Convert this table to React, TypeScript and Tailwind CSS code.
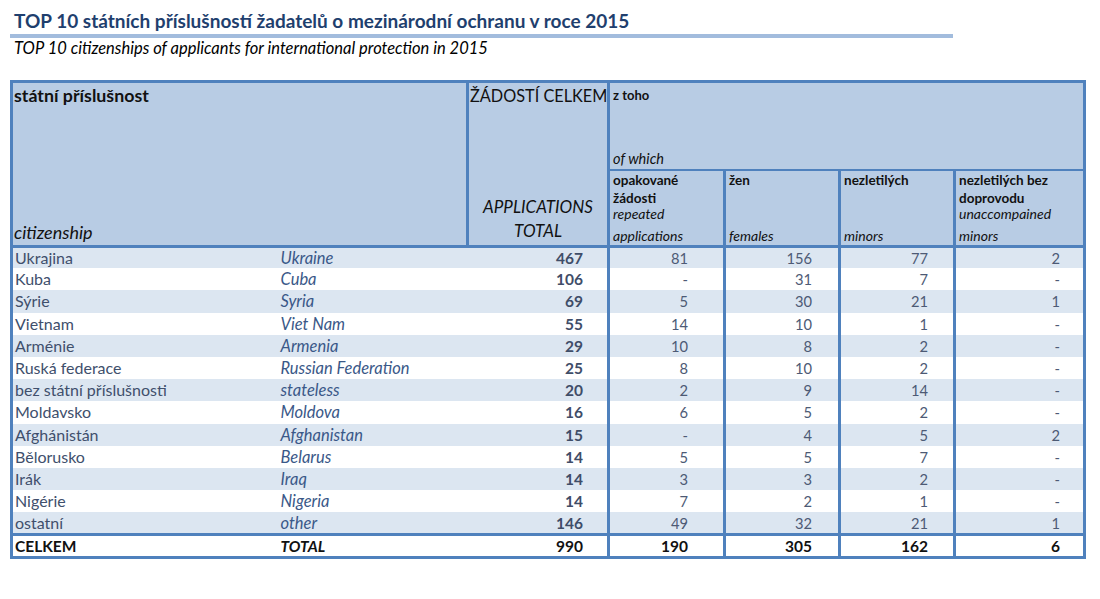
import React from "react";

type Row = [string, string, string, string, string, string, string];

const rows: Row[] = [
  ["Ukrajina", "Ukraine", "467", "81", "156", "77", "2"],
  ["Kuba", "Cuba", "106", "-", "31", "7", "-"],
  ["Sýrie", "Syria", "69", "5", "30", "21", "1"],
  ["Vietnam", "Viet Nam", "55", "14", "10", "1", "-"],
  ["Arménie", "Armenia", "29", "10", "8", "2", "-"],
  ["Ruská federace", "Russian Federation", "25", "8", "10", "2", "-"],
  ["bez státní příslušnosti", "stateless", "20", "2", "9", "14", "-"],
  ["Moldavsko", "Moldova", "16", "6", "5", "2", "-"],
  ["Afghánistán", "Afghanistan", "15", "-", "4", "5", "2"],
  ["Bělorusko", "Belarus", "14", "5", "5", "7", "-"],
  ["Irák", "Iraq", "14", "3", "3", "2", "-"],
  ["Nigérie", "Nigeria", "14", "7", "2", "1", "-"],
  ["ostatní", "other", "146", "49", "32", "21", "1"],
];

export default function App() {
  return (
    <div
      className="w-[1100px] h-[599px] bg-white overflow-hidden"
      style={{ fontFamily: "Lato, 'Open Sans', sans-serif" }}
    >
      <div className="pt-[9px] pl-[10px]">
        <div className="pl-[4px] text-[19px] leading-[23px] font-bold text-[#1f3f6e]">
          TOP 10 státních příslušností žadatelů o mezinárodní ochranu v roce 2015
        </div>
        <div className="mt-[2px] w-[943px] h-[4px] bg-[#a2bcdd]" />
        <div className="pl-[4px] mt-[1px] text-[16.5px] leading-[19px] italic text-black">
          TOP 10 citizenships of applicants for international protection in 2015
        </div>
      </div>

      <div className="mt-[22px] ml-[10px]">
        <table className="table-fixed border-collapse border-[3px] border-[#4f81bd] w-[1073px]">
          <colgroup>
            <col className="w-[266px]" />
            <col className="w-[190px]" />
            <col className="w-[141px]" />
            <col className="w-[116px]" />
            <col className="w-[115px]" />
            <col className="w-[115px]" />
            <col className="w-[130px]" />
          </colgroup>
          <thead>
            <tr className="h-[87px] bg-[#b8cce4]">
              <td
                colSpan={2}
                rowSpan={2}
                className="align-top p-0 border-r-[3px] border-b-[3px] border-[#4f81bd]"
              >
                <div className="flex flex-col justify-between h-[161px] pl-[1px] pt-[2px] pb-[1px]">
                  <span className="text-[17.8px] leading-[21px] font-bold text-[#111]">
                    státní příslušnost
                  </span>
                  <span className="text-[18px] leading-[21px] italic text-[#111]">
                    citizenship
                  </span>
                </div>
              </td>
              <td
                rowSpan={2}
                className="align-top p-0 border-r-[3px] border-b-[3px] border-[#4f81bd]"
              >
                <div className="flex flex-col justify-between h-[161px] pt-[2px] pb-[1px]">
                  <span className="pl-[1px] text-[16.3px] leading-[21px] text-[#111] whitespace-nowrap">
                    ŽÁDOSTÍ CELKEM
                  </span>
                  <span className="text-center text-[17px] leading-[24px] italic text-[#111]">
                    APPLICATIONS
                    <br />
                    TOTAL
                  </span>
                </div>
              </td>
              <td colSpan={4} className="align-top p-0 border-b-[2px] border-[#4f81bd]">
                <div className="flex flex-col justify-between h-[86px] pl-[3px] pt-[4px] pb-[2px]">
                  <span className="text-[13px] leading-[16px] font-bold text-[#111]">z toho</span>
                  <span className="text-[14.5px] leading-[16px] italic text-[#111]">of which</span>
                </div>
              </td>
            </tr>
            <tr className="h-[76px] bg-[#b8cce4]">
              {[
                ["opakované", "žádosti", "repeated", "applications"],
                ["žen", "", "", "females"],
                ["nezletilých", "", "", "minors"],
                ["nezletilých bez", "doprovodu", "unaccompained", "minors"],
              ].map((c, i) => (
                <td
                  key={i}
                  className={`align-top p-0 border-b-[3px] border-[#4f81bd] ${
                    i < 3 ? "border-r-[3px]" : ""
                  }`}
                >
                  <div className="flex flex-col justify-between h-[73px] pl-[3px] pt-[0px] pb-[0px] text-[#111]">
                    <div className="flex flex-col">
                      <span className="font-bold text-[13.5px] leading-[19px]">{c[0]}</span>
                      <span className="font-bold text-[13.5px] leading-[16px]">{c[1]}</span>
                      <span className="italic text-[14px] leading-[15px]">{c[2]}</span>
                    </div>
                    <span className="italic text-[14px] leading-[17px]">{c[3]}</span>
                  </div>
                </td>
              ))}
            </tr>
          </thead>
          <tbody>
            {rows.map((r, i) => (
              <tr
                key={r[0]}
                className={`h-[22.2px] text-[16px] leading-[20px] ${
                  i % 2 === 0 ? "bg-[#dce6f1]" : "bg-white"
                }`}
              >
                <td className="p-0 pl-[2px] text-[#404f6c] whitespace-nowrap">{r[0]}</td>
                <td className="p-0 pl-[3px] italic text-[16.5px] text-[#3a5888] whitespace-nowrap">
                  {r[1]}
                </td>
                <td className="p-0 pr-[24px] text-right font-bold text-[15.5px] text-[#3f4d68] border-r-[3px] border-[#4f81bd]">
                  {r[2]}
                </td>
                <td className="p-0 pr-[35px] text-right text-[14.7px] text-[#4d5a75] border-r-[3px] border-[#4f81bd]">
                  {r[3]}
                </td>
                <td className="p-0 pr-[26px] text-right text-[14.7px] text-[#4d5a75] border-r-[3px] border-[#4f81bd]">
                  {r[4]}
                </td>
                <td className="p-0 pr-[25px] text-right text-[14.7px] text-[#4d5a75] border-r-[3px] border-[#4f81bd]">
                  {r[5]}
                </td>
                <td className="p-0 pr-[23px] text-right text-[14.7px] text-[#4d5a75]">{r[6]}</td>
              </tr>
            ))}
            <tr className="h-[22px] bg-white text-[15.5px] leading-[20px] font-bold text-[#111] border-t-[3px] border-[#4f81bd]">
              <td className="p-0 pl-[2px]">CELKEM</td>
              <td className="p-0 pl-[3px] italic">TOTAL</td>
              <td className="p-0 pr-[24px] text-right border-r-[3px] border-[#4f81bd]">990</td>
              <td className="p-0 pr-[35px] text-right border-r-[3px] border-[#4f81bd]">190</td>
              <td className="p-0 pr-[26px] text-right border-r-[3px] border-[#4f81bd]">305</td>
              <td className="p-0 pr-[25px] text-right border-r-[3px] border-[#4f81bd]">162</td>
              <td className="p-0 pr-[23px] text-right">6</td>
            </tr>
          </tbody>
        </table>
      </div>
    </div>
  );
}
